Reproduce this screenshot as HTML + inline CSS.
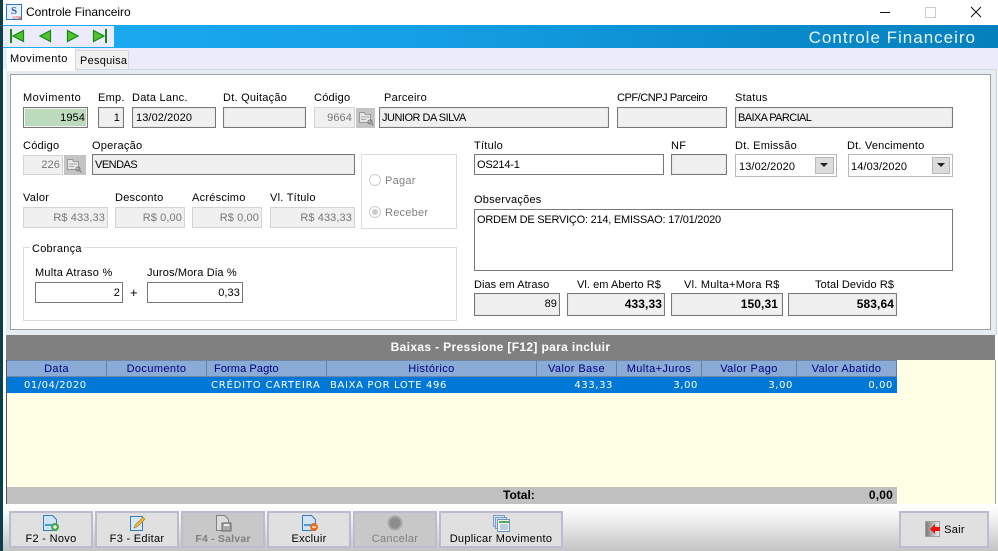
<!DOCTYPE html>
<html><head><meta charset="utf-8"><style>
html,body{margin:0;padding:0}
body{width:998px;height:551px;overflow:hidden;background:#fff;position:relative;font-family:"Liberation Sans",sans-serif;font-size:11px;color:#000}
div,svg{position:absolute;box-sizing:border-box}
.l{white-space:nowrap;letter-spacing:.25px;line-height:14px;margin-top:1px}
.f{border:1px solid #787878;background:#f0f0f0;outline:0;line-height:21px;padding:0 3px;white-space:nowrap;letter-spacing:.1px;box-shadow:inset 0 0 0 1px #e8e8e8}
.u{letter-spacing:-.5px;padding-left:2px}
.d{border:1px solid #d4d4d4;background:#f0f0f0;color:#777;text-align:right;line-height:20px;padding:0 2px;white-space:nowrap;letter-spacing:.1px}
.w{background:#fff;box-shadow:none}
.r{text-align:right}
.h{top:360px;height:17px;background:#8aabd6;border-right:1px solid #6b7f9a;border-top:1px solid #6f86a8;border-bottom:1px solid #6f86a8;color:#000080;text-align:center;line-height:17px;font-size:11px;letter-spacing:.4px;white-space:nowrap}
.c{top:377px;height:16px;color:#fff;line-height:18px;font-family:"DejaVu Sans",sans-serif;font-size:10px;white-space:nowrap;letter-spacing:.6px}
.b{top:511px;height:37px;background:#e0e0e0;border:2px solid #bcbcd0;text-align:center;line-height:14px;padding-top:19px;letter-spacing:.3px;white-space:nowrap}
.x{background:#c8c8c8;color:#808080;border-color:#bcbcd0}
.bo{font-weight:bold;font-size:12px}
</style></head><body>
<div style="left:0;top:0;width:3px;height:551px;background:#0c3f4c"></div>

<!-- title bar -->
<svg style="left:6px;top:4px" width="16" height="16" viewBox="0 0 16 16"><rect x=".5" y=".5" width="15" height="15" fill="#e8f0fa" stroke="#2a78c8"/><text x="8" y="10" font-family="Liberation Serif,serif" font-size="11" font-weight="bold" fill="#2c5fa8" text-anchor="middle">S</text><rect x="7" y="11" width="8" height="4" fill="#fff"/><text x="11" y="15" font-size="4" font-weight="bold" fill="#c81e1e" text-anchor="middle" font-family="Liberation Sans,sans-serif">CTB</text></svg>
<div class="l" style="left:26px;top:4px;font-size:12px;letter-spacing:0">Controle Financeiro</div>
<svg style="left:870px;top:0" width="128" height="25"><path d="M10 12.500H20" stroke="#111" stroke-width="1"/><rect x="55.500" y="7.500" width="10" height="10" fill="none" stroke="#ccc"/><path d="M101 7L111 17M111 7L101 17" stroke="#111" stroke-width="1"/></svg>

<!-- blue bar -->
<div style="left:3px;top:25px;width:995px;height:23px;background:linear-gradient(90deg,#1cabf3 0%,#16a0e6 40%,#0a8ccd 75%,#0580bd 100%)"></div>
<div style="left:3px;top:26px;width:111px;height:21px;background:#ebebfb"></div>
<svg style="left:3px;top:26px" width="111" height="21" viewBox="3 26 111 21">
<path d="M10 29h2v14h-2z" fill="#138a13"/><path d="M23.500 30.500V41.500L13 36z" fill="#55c030" stroke="#138a13" stroke-width="1.200"/>
<path d="M50.500 30.500V41.500L40 36z" fill="#55c030" stroke="#138a13" stroke-width="1.200"/>
<path d="M67.500 30.500V41.500L78 36z" fill="#55c030" stroke="#138a13" stroke-width="1.200"/>
<path d="M93.500 30.500V41.500L104 36z" fill="#55c030" stroke="#138a13" stroke-width="1.200"/><path d="M105 29h2v14h-2z" fill="#138a13"/></svg>
<div class="l" style="right:22px;top:27px;color:#e8f6ff;font-size:17px;line-height:19px;letter-spacing:1px">Controle Financeiro</div>

<!-- tab strip -->
<div style="left:3px;top:48px;width:995px;height:21px;background:#ebebfb"></div>
<div style="left:6px;top:69px;width:991px;height:266px;background:#e6edf2;border-top:1px solid #d8d8d8;border-right:1px solid #d0d0d0"></div>
<div style="left:7px;top:48px;width:68px;height:23px;background:#fff"></div>
<div class="l" style="left:10px;top:51px;letter-spacing:.45px">Movimento</div>
<div style="left:75px;top:50px;width:54px;height:19px;background:#f0f0f0;border:1px solid #d8d8d8;border-bottom:0"></div>
<div class="l" style="left:80px;top:53px">Pesquisa</div>

<!-- panel -->
<div style="left:10px;top:74px;width:981px;height:256px;background:#fff;border:1px solid #a0a0a0"></div>

<!-- row 1 -->
<div class="l" style="left:23px;top:90px;letter-spacing:.5px">Movimento</div>
<div class="l" style="left:98px;top:90px">Emp.</div>
<div class="l" style="left:132px;top:90px">Data Lanc.</div>
<div class="l" style="left:223px;top:90px">Dt. Quitação</div>
<div class="l" style="left:314px;top:90px">Código</div>
<div class="l" style="left:384px;top:90px">Parceiro</div>
<div class="l" style="left:617px;top:90px;letter-spacing:-.45px">CPF/CNPJ Parceiro</div>
<div class="l" style="left:735px;top:90px">Status</div>

<div class="f r" style="left:23px;top:107px;width:65px;height:21px;background:#bcdabc;box-shadow:inset 0 0 0 1px #f2f2f2;line-height:20px;padding-right:2px">1954</div>
<div class="f r" style="left:98px;top:107px;width:26px;height:21px;line-height:20px">1</div>
<div class="f" style="left:132px;top:107px;width:84px;height:21px;line-height:20px">13/02/2020</div>
<div class="f" style="left:223px;top:107px;width:83px;height:21px"></div>
<div class="d" style="left:314px;top:107px;width:41px;height:21px">9664</div>
<div style="left:356px;top:108px;width:19px;height:20px;background:#c4c4c4"></div>
<svg style="left:358px;top:110px" width="17" height="17"><path d="M1.500 2.500h5l1 2h5v8h-11z" fill="#e6e6e6" stroke="#999"/><path d="M3 7h8M3 9.500h5" stroke="#aaa"/><circle cx="12" cy="12" r="2" fill="none" stroke="#777"/><path d="M13.500 13.500l2 2" stroke="#777"/></svg>
<div class="f u" style="left:379px;top:107px;width:230px;height:21px;line-height:20px">JUNIOR DA SILVA</div>
<div class="f" style="left:617px;top:107px;width:110px;height:21px"></div>
<div class="f u" style="left:735px;top:107px;width:218px;height:21px;line-height:20px;letter-spacing:-.6px">BAIXA PARCIAL</div>

<!-- row 2 -->
<div class="l" style="left:23px;top:138px">Código</div>
<div class="l" style="left:92px;top:138px">Operação</div>
<div class="d" style="left:23px;top:155px;width:40px;height:20px;line-height:19px">226</div>
<div style="left:64px;top:155px;width:22px;height:20px;background:#c4c4c4"></div>
<svg style="left:66px;top:157px" width="17" height="17"><path d="M1.500 2.500h5l1 2h5v8h-11z" fill="#e6e6e6" stroke="#999"/><path d="M3 7h8M3 9.500h5" stroke="#aaa"/><circle cx="12" cy="12" r="2" fill="none" stroke="#777"/><path d="M13.500 13.500l2 2" stroke="#777"/></svg>
<div class="f u" style="left:92px;top:154px;width:263px;height:21px;line-height:20px">VENDAS</div>

<div style="left:361px;top:154px;width:96px;height:75px;border:1px solid #dcdcdc"></div>
<svg style="left:368px;top:172px" width="14" height="50"><circle cx="7" cy="8" r="5.500" fill="#fff" stroke="#ccc"/><circle cx="7" cy="40" r="5.500" fill="#fff" stroke="#ccc"/><circle cx="7" cy="40" r="3" fill="#ccc"/></svg>
<div class="l" style="left:385px;top:173px;color:#808080">Pagar</div>
<div class="l" style="left:385px;top:205px;color:#808080">Receber</div>

<div class="l" style="left:23px;top:190px">Valor</div>
<div class="l" style="left:115px;top:190px">Desconto</div>
<div class="l" style="left:192px;top:190px">Acréscimo</div>
<div class="l" style="left:270px;top:190px">Vl. Título</div>
<div class="d" style="left:23px;top:207px;width:85px;height:21px">R$ 433,33</div>
<div class="d" style="left:115px;top:207px;width:70px;height:21px">R$ 0,00</div>
<div class="d" style="left:192px;top:207px;width:70px;height:21px">R$ 0,00</div>
<div class="d" style="left:270px;top:207px;width:85px;height:21px">R$ 433,33</div>

<!-- cobranca -->
<div style="left:23px;top:247px;width:434px;height:74px;border:1px solid #dcdcdc"></div>
<div class="l" style="left:30px;top:241px;background:#fff;padding:0 2px">Cobrança</div>
<div class="l" style="left:35px;top:265px">Multa Atraso %</div>
<div class="l" style="left:147px;top:265px;letter-spacing:.15px">Juros/Mora Dia %</div>
<div class="f r w" style="left:35px;top:282px;width:88px;height:21px;line-height:20px;padding-right:2px">2</div>
<div class="l" style="left:130px;top:285px;font-size:13px">+</div>
<div class="f r w" style="left:147px;top:282px;width:96px;height:21px;line-height:20px;padding-right:2px">0,33</div>

<!-- right column -->
<div class="l" style="left:474px;top:138px">Título</div>
<div class="l" style="left:671px;top:138px">NF</div>
<div class="l" style="left:735px;top:138px">Dt. Emissão</div>
<div class="l" style="left:847px;top:138px;letter-spacing:.2px">Dt. Vencimento</div>
<div class="f w" style="left:474px;top:154px;width:190px;height:21px;line-height:20px;letter-spacing:-.2px;padding-left:2px">OS214-1</div>
<div class="f" style="left:671px;top:154px;width:56px;height:21px"></div>
<div style="left:735px;top:154px;width:102px;height:23px;background:#fff;border:1px solid #b8b8b8;line-height:24px;padding-left:3px;letter-spacing:.1px">13/02/2020</div>
<div style="left:815px;top:157px;width:19px;height:17px;background:#dcdcdc;border:1px solid #b8b8b8"></div>
<svg style="left:820px;top:163px" width="9" height="5"><path d="M0 0h8L4 4z" fill="#222"/></svg>
<div style="left:848px;top:154px;width:105px;height:23px;background:#fff;border:1px solid #b8b8b8;line-height:24px;padding-left:2px;letter-spacing:.1px">14/03/2020</div>
<div style="left:932px;top:157px;width:18px;height:17px;background:#dcdcdc;border:1px solid #b8b8b8"></div>
<svg style="left:937px;top:163px" width="9" height="5"><path d="M0 0h8L4 4z" fill="#222"/></svg>

<div class="l" style="left:474px;top:192px">Observações</div>
<div class="f w" style="left:474px;top:209px;width:479px;height:62px;line-height:17px;padding:2px 0 0 2px;letter-spacing:-.23px">ORDEM DE SERVIÇO: 214, EMISSAO: 17/01/2020</div>

<div class="l" style="left:474px;top:277px;letter-spacing:.05px">Dias em Atraso</div>
<div class="l" style="left:577px;top:277px;letter-spacing:.05px">Vl. em Aberto R$</div>
<div class="l" style="left:684px;top:277px;letter-spacing:.25px">Vl. Multa+Mora R$</div>
<div class="l" style="left:815px;top:277px;letter-spacing:.1px">Total Devido R$</div>
<div class="f r" style="left:474px;top:293px;width:86px;height:23px;line-height:21px;padding-right:2px">89</div>
<div class="f r bo" style="left:567px;top:293px;width:98px;height:23px;line-height:21px;padding-right:2px">433,33</div>
<div class="f r bo" style="left:671px;top:293px;width:112px;height:23px;line-height:21px;padding-right:4px">150,31</div>
<div class="f r bo" style="left:788px;top:293px;width:109px;height:23px;line-height:21px;padding-right:2px">583,64</div>

<!-- grid -->
<div style="left:6px;top:335px;width:989px;height:25px;background:#808080;color:#fff;font-weight:bold;font-size:12px;text-align:center;line-height:25px;letter-spacing:.35px">Baixas - Pressione [F12] para incluir</div>
<div style="left:7px;top:360px;width:988px;height:127px;background:#ffffe6"></div>
<div style="left:6px;top:360px;width:1px;height:144px;background:#555"></div>
<div style="left:995px;top:360px;width:1px;height:144px;background:#a0a0a0"></div>
<div class="h" style="left:7px;width:100px">Data</div>
<div class="h" style="left:107px;width:100px">Documento</div>
<div class="h" style="left:207px;width:120px;text-align:left;padding-left:7px;letter-spacing:.1px">Forma Pagto</div>
<div class="h" style="left:327px;width:210px">Histórico</div>
<div class="h" style="left:537px;width:80px">Valor Base</div>
<div class="h" style="left:617px;width:85px">Multa+Juros</div>
<div class="h" style="left:702px;width:95px">Valor Pago</div>
<div class="h" style="left:797px;width:100px">Valor Abatido</div>
<div style="left:7px;top:377px;width:890px;height:16px;background:#0078d7"></div>
<div class="c" style="left:24px;letter-spacing:.5px">01/04/2020</div>
<div class="c" style="left:211px;letter-spacing:.8px">CRÉDITO CARTEIRA</div>
<div class="c" style="left:330px;letter-spacing:.65px">BAIXA POR LOTE 496</div>
<div class="c r" style="left:537px;width:76px">433,33</div>
<div class="c r" style="left:617px;width:81px">3,00</div>
<div class="c r" style="left:702px;width:91px">3,00</div>
<div class="c r" style="left:797px;width:96px">0,00</div>
<div style="left:7px;top:487px;width:890px;height:17px;background:#c0c0c0"></div>
<div style="left:897px;top:487px;width:98px;height:17px;background:#ffffe6"></div>
<div class="l bo" style="left:503px;top:487px;letter-spacing:0">Total:</div>
<div class="l bo r" style="left:797px;top:487px;width:96px;letter-spacing:.2px">0,00</div>

<!-- bottom -->
<div style="left:3px;top:505px;width:995px;height:46px;background:linear-gradient(180deg,#fff 0%,#f4f4f4 25%,#c4c4c4 100%)"></div>
<div class="b" style="left:9px;width:84px">F2 - Novo</div>
<div class="b" style="left:95px;width:84px">F3 - Editar</div>
<div class="b x" style="left:181px;width:84px;font-weight:bold;font-size:10.500px;letter-spacing:.2px">F4 - Salvar</div>
<div class="b" style="left:267px;width:84px">Excluir</div>
<div class="b x" style="left:353px;width:84px">Cancelar</div>
<div class="b" style="left:439px;width:124px">Duplicar Movimento</div>
<div class="b" style="left:899px;width:90px;padding:0 0 0 21px;line-height:34px">Sair</div>

<!-- button icons -->
<svg style="left:42px;top:515px" width="18" height="17"><path d="M1.500 .500h9l4 4v11h-13z" fill="#cfe4f8" stroke="#3a78b8"/><path d="M3 10h10" stroke="#4a9ae0" stroke-width="2"/><circle cx="13" cy="12" r="4" fill="#4aa84a"/><path d="M11 12h4M13 10v4" stroke="#fff" stroke-width="1.200"/></svg>
<svg style="left:129px;top:515px" width="18" height="17"><path d="M1.500 1.500h12v14h-12z" fill="#d8e8f8" stroke="#3a78b8"/><path d="M5 13l1-3 8-8 2 2-8 8z" fill="#f0b840" stroke="#b07820" stroke-width=".6"/></svg>
<svg style="left:215px;top:515px" width="18" height="17"><path d="M1.500 .500h8l4 4v11h-12z" fill="#ddd" stroke="#808080"/><rect x="7" y="8" width="9" height="8" fill="#aaa" stroke="#666"/><rect x="9" y="9" width="5" height="2" fill="#eee"/></svg>
<svg style="left:301px;top:515px" width="18" height="17"><path d="M1.500 .500h9l4 4v11h-13z" fill="#cfe4f8" stroke="#3a78b8"/><path d="M3 10h10" stroke="#4a9ae0" stroke-width="2"/><circle cx="13" cy="12" r="4" fill="#e8701a"/><path d="M11 12h4" stroke="#fff" stroke-width="1.200"/></svg>
<svg style="left:387px;top:515px" width="16" height="16"><circle cx="8" cy="8" r="6.500" fill="#8c8c8c" stroke="#a8a8a8" stroke-width="2"/></svg>
<svg style="left:493px;top:515px" width="18" height="17"><rect x=".5" y=".5" width="11" height="11" fill="#d8e4f4" stroke="#7a9cc8"/><rect x="2.500" y="2.500" width="11" height="11" fill="#d8e4f4" stroke="#7a9cc8"/><rect x="4.500" y="4.500" width="12" height="12" fill="#eef4ee" stroke="#6a94c4"/><path d="M6 7h10" stroke="#58a858" stroke-width="2"/><path d="M7 10h8M7 12h8M7 14h8" stroke="#8aa8c8"/></svg>
<svg style="left:925px;top:521px" width="16" height="16"><defs><linearGradient id="g"><stop offset="0" stop-color="#777"/><stop offset="1" stop-color="#f0f0f0"/></linearGradient></defs><rect x=".5" y=".5" width="14" height="15" fill="url(#g)" stroke="#a0a0a0"/><path d="M5 8l5-5v3h5v4h-5v3z" fill="#f01010"/></svg>
</body></html>
